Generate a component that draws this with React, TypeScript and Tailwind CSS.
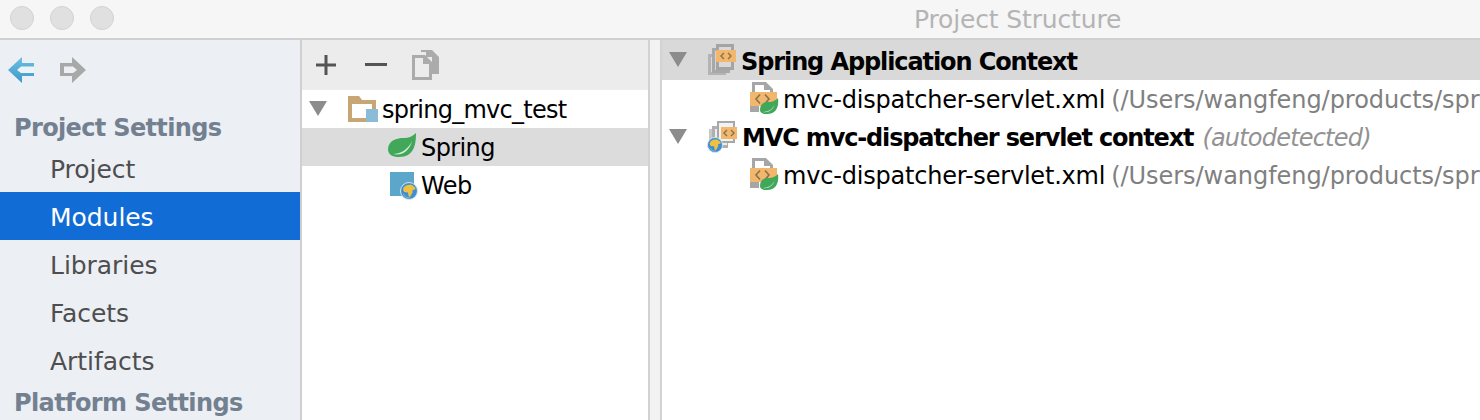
const navItems = ["Project", "Modules", "Libraries", "Facets", "Artifacts"];

function Triangle() {
  return (
    <svg width="18" height="16" viewBox="0 0 18 16" className="shrink-0">
      <path d="M0 0H18L9 15Z" fill="#8c8c8c" />
    </svg>
  );
}

function Globe({ size = 18 }: { size?: number }) {
  return (
    <svg width={size} height={size} viewBox="0 0 18 18" className="shrink-0">
      <circle cx="9" cy="9" r="8.500" fill="#3f8fd0" stroke="#d5e6f2" />
      <path d="M4 5C6 3 9 2.500 12 3L15.500 6L15 7.500L12.500 8L12.500 10.500L10 15L8.500 14L8 10.500L4 10L3 7Z" fill="#f0c040" />
      <path d="M3 12C5 15 7 16 10 16" fill="none" stroke="#7fb8e0" />
    </svg>
  );
}

function Leaf({ width = 28, height = 24 }: { width?: number; height?: number }) {
  return (
    <svg width={width} height={height} viewBox="0 0 28 24" className="shrink-0">
      <path d="M0 17C0 7 9 5 16 5C21 5 25 3 28 0C28 12 26 24 11 24C6 24 1 23 0 17Z" fill="#41a85a" />
      <path d="M5 21C12 21 20 17 24 8C21 19 13 23 5 21Z" fill="#d8efdc" />
    </svg>
  );
}

function XmlFile() {
  return (
    <svg width="29" height="32" viewBox="0 0 29 32" className="mb-[3px] shrink-0">
      <path d="M2 0H16L23 7V10H20V8H14V3H5V10H2Z" fill="#a6a6a6" />
      <path d="M0 24H9V30H0Z" fill="#a6a6a6" />
      <rect x="0" y="10" width="27" height="14" fill="#f2b76c" />
      <path d="M10 12.500L6 17L10 21.500M15 12.500L19 17L15 21.500" fill="none" stroke="#85734f" strokeWidth="1.600" />
      <path d="M10 28C10 21 15 20 19 20C23 20 26 18 28 16C29 24 27 32 17 32C13 32 10 31 10 28Z" fill="#41a85a" />
      <path d="M13 30C18 30 23 27 25 22C23 28 18 31 13 30Z" fill="#d8efdc" />
    </svg>
  );
}

function ContextStack() {
  return (
    <svg width="28" height="32" viewBox="0 0 28 32" className="shrink-0">
      <path fillRule="evenodd" d="M0 10H18V31H0ZM3 13V28H15V13Z" fill="#b4b4b4" />
      <path fillRule="evenodd" d="M4 4H22V29H4ZM7 7V26H19V7Z" fill="#a8a8a8" />
      <rect x="7" y="7" width="12" height="19" fill="#d4d4d4" />
      <path fillRule="evenodd" d="M8 0H26V26H8ZM11 3V23H23V3Z" fill="#a4a4a4" />
      <rect x="11" y="3" width="12" height="20" fill="#d9d9d9" />
      <rect x="8" y="6" width="20" height="12" fill="#f2b76c" />
      <path d="M16 9L13 12L16 15M20 9L23 12L20 15" fill="none" stroke="#85734f" strokeWidth="1.400" />
    </svg>
  );
}

function MvcStack() {
  return (
    <div className="relative h-[32px] w-[30px] shrink-0">
      <svg width="30" height="32" viewBox="0 0 30 32">
        <rect x="2" y="8" width="14" height="18" fill="#c8c8c8" />
        <rect x="5" y="5" width="16" height="22" fill="#b0b0b0" />
        <rect x="8" y="8" width="12" height="16" fill="#eeeeee" />
        <rect x="10" y="0" width="18" height="22" fill="#a8a8a8" />
        <rect x="12" y="2" width="14" height="18" fill="#f2f2f2" />
        <rect x="14" y="6" width="16" height="12" fill="#f2b76c" />
        <path d="M20 9L17 12L20 15M24 9L27 12L24 15" fill="none" stroke="#85734f" strokeWidth="1.400" />
      </svg>
      <div className="absolute bottom-0 left-0">
        <Globe size={16} />
      </div>
    </div>
  );
}

function App() {
  return (
    <div className="flex h-[420px] w-[1480px] flex-col overflow-hidden bg-white font-['DejaVu_Sans',sans-serif]">
      <div className="relative flex h-[40px] shrink-0 items-center gap-[16px] border-b-2 border-[#d0d0d0] bg-[#f6f6f6] pb-[2px] pl-[10px]">
        {[0, 1, 2].map((i) => (
          <span key={i} className="h-[24px] w-[24px] rounded-full border border-[#d2d2d2] bg-[#e0e0e0]" />
        ))}
        <div className="absolute left-[914px] top-[4px] text-[25px] leading-[32px] tracking-[-0.15px] text-[#b4b4b4]">
          Project Structure
        </div>
      </div>

      <div className="flex min-h-0 flex-1">
        <aside className="w-[302px] shrink-0 border-r-2 border-[#cfcfd2] bg-[#eceff4]">
          <div className="flex h-[56px] items-center gap-[26px] pl-[8px] pt-[3px]">
            <svg width="26" height="26" viewBox="0 0 26 26">
              <defs>
                <linearGradient id="backFill" x1="0" y1="0" x2="0" y2="1">
                  <stop offset="0" stopColor="#6cc0e4" />
                  <stop offset="1" stopColor="#3e97c8" />
                </linearGradient>
              </defs>
              <path d="M14 0V6H26V19H14V26L0 13Z" fill="url(#backFill)" />
              <path d="M13 9.500H26V16H13L9 13Z" fill="#eef3f6" />
            </svg>
            <svg width="26" height="26" viewBox="0 0 26 26">
              <path d="M12 0V6H0V19H12V26L26 13Z" fill="#a8a8a8" />
              <path d="M13 9.500H4V16H13L17 13Z" fill="#eef0f4" />
            </svg>
          </div>
          <div className="flex h-[48px] items-center pl-[14px] pt-[16px] text-[24px] font-bold tracking-[-0.65px] text-[#738090]">
            Project Settings
          </div>
          <nav className="flex flex-col">
            {navItems.map((item) => (
              <div
                key={item}
                className={`flex h-[48px] items-center pl-[50px] pt-[3px] text-[25px] tracking-[-0.05px] ${
                  item === "Modules" ? "bg-[#116cd6] text-white" : "text-[#4e4e4e]"
                }`}
              >
                {item}
              </div>
            ))}
          </nav>
          <div className="pl-[14px] pt-[1px] text-[24px] font-bold leading-[36px] tracking-[-0.6px] text-[#738090]">
            Platform Settings
          </div>
        </aside>

        <section className="w-[346px] shrink-0">
          <div className="flex h-[50px] items-center bg-[#ececec] pl-[13px]">
            <svg width="22" height="22" viewBox="0 0 22 22">
              <path d="M9.500 1H12.500V9.500H21V12.500H12.500V21H9.500V12.500H1V9.500H9.500Z" fill="#545454" />
            </svg>
            <svg width="22" height="4" viewBox="0 0 22 4" className="ml-[28px]">
              <rect width="22" height="3" fill="#545454" />
            </svg>
            <svg width="30" height="32" viewBox="0 0 30 32" className="ml-[24px]">
              <path d="M10 1H21L28 8V25H21V8H15V3H10Z" fill="#ababab" />
              <path fillRule="evenodd" d="M1 6H14L21 13V31H1ZM4 9V28H18V15H12V9Z" fill="#ababab" />
            </svg>
          </div>
          <div className="flex h-[38px] items-center pl-[7px] text-[24px] tracking-[-0.75px] text-black">
            <Triangle />
            <svg width="30" height="26" viewBox="0 0 30 26" className="ml-[21px] shrink-0">
              <path fillRule="evenodd" d="M0 0H11L14 4H28V13H24V8H4V22H18V26H0Z" fill="#c7a575" />
              <rect x="18" y="13" width="12" height="13" fill="#8abbd7" />
            </svg>
            <span className="ml-[4px] pt-[2px]">spring_mvc_test</span>
          </div>
          <div className="flex h-[38px] items-center bg-[#dcdcdc] pl-[86px] text-[24px] tracking-[-0.6px] text-black">
            <div className="mb-[4px]">
              <Leaf />
            </div>
            <span className="ml-[5px] pt-[2px]">Spring</span>
          </div>
          <div className="flex h-[38px] items-center pl-[88px] text-[24px] tracking-[-0.6px] text-black">
            <div className="relative mb-[2px] h-[24px] w-[24px] shrink-0 bg-[#5ca6c9]">
              <div className="absolute -bottom-[4px] -right-[4px]">
                <Globe />
              </div>
            </div>
            <span className="ml-[7px] pt-[2px]">Web</span>
          </div>
        </section>

        <div className="w-[14px] shrink-0 border-x-2 border-[#d2d2d2] bg-[#f2f2f2]" />

        <section className="min-w-0 flex-1 overflow-hidden whitespace-nowrap text-[24px] text-black">
          <div className="flex h-[40px] items-center bg-[#d9d9d9] pl-[7px]">
            <Triangle />
            <div className="ml-[21px]">
              <ContextStack />
            </div>
            <span className="ml-[5px] pt-[4px] font-bold tracking-[-1.1px]">Spring Application Context</span>
          </div>
          <div className="flex h-[38px] items-center pl-[88px]">
            <XmlFile />
            <span className="ml-[4px] pt-[2px] tracking-[-0.2px]">mvc-dispatcher-servlet.xml</span>
            <span className="ml-[6px] pt-[2px] tracking-[-0.05px] text-[#808080]">(/Users/wangfeng/products/spr</span>
          </div>
          <div className="flex h-[38px] items-center pl-[7px]">
            <Triangle />
            <div className="ml-[20px]">
              <MvcStack />
            </div>
            <span className="ml-[5px] pt-[2px] font-bold tracking-[-1.15px]">MVC mvc-dispatcher servlet context</span>
            <span className="ml-[9px] pt-[2px] italic tracking-[-0.8px] text-[#929292]">(autodetected)</span>
          </div>
          <div className="flex h-[38px] items-center pl-[88px]">
            <XmlFile />
            <span className="ml-[4px] pt-[2px] tracking-[-0.2px]">mvc-dispatcher-servlet.xml</span>
            <span className="ml-[6px] pt-[2px] tracking-[-0.05px] text-[#808080]">(/Users/wangfeng/products/spr</span>
          </div>
        </section>
      </div>
    </div>
  );
}

export default App;
